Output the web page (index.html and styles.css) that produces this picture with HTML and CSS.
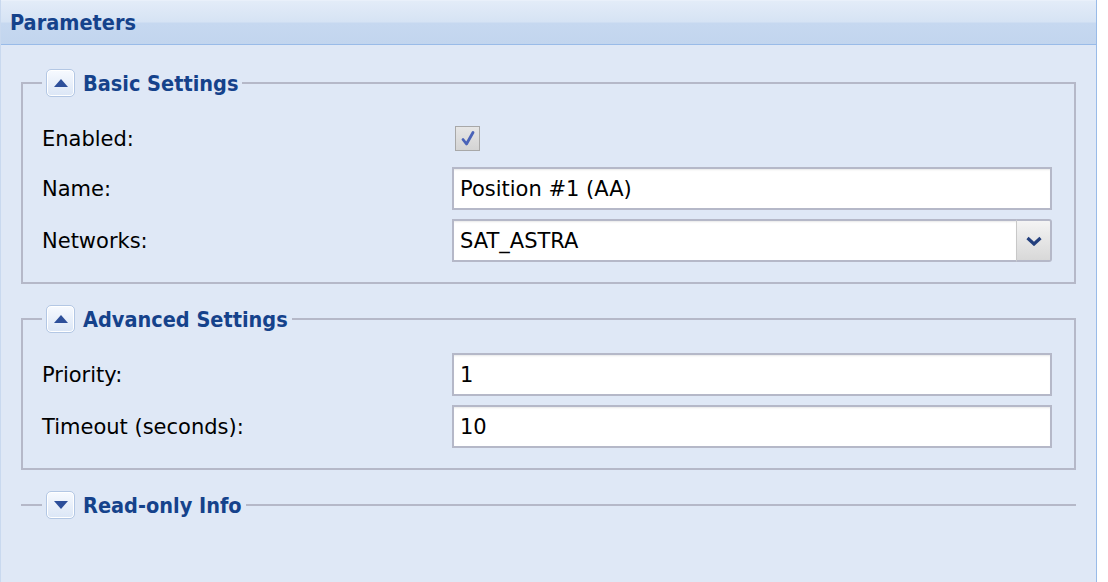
FILE: index.html
```html
<!DOCTYPE html>
<html lang="en">
<head>
<meta charset="UTF-8">
<title>Parameters</title>
<link rel="stylesheet" href="styles.css">
</head>
<body>
<div class="panel">
  <div class="panel-header">Parameters</div>
  <div class="panel-body">

    <fieldset class="fs">
      <legend><span class="toggle"><svg width="14" height="8" viewBox="0 0 14 8"><path d="M0 8 L7 0 L14 8 Z" fill="#2d4f9a"/></svg></span>Basic Settings</legend>
      <div class="row row-check">
        <label>Enabled:</label>
        <span class="check"><svg width="22" height="22" viewBox="0 0 22 22"><path d="M6 11.5 L9.5 16 L16 4.5" fill="none" stroke="#4a63b8" stroke-width="2.8" stroke-linecap="round" stroke-linejoin="round"/></svg></span>
      </div>
      <div class="row">
        <label>Name:</label>
        <div class="field">Position #1 (AA)</div>
      </div>
      <div class="row">
        <label>Networks:</label>
        <div class="combo">
          <div class="field">SAT_ASTRA</div>
          <span class="trigger"><svg width="16" height="10" viewBox="0 0 16 10"><path d="M1.5 2 L8 8 L14.5 2" fill="none" stroke="#24407e" stroke-width="3.2" stroke-linejoin="miter"/></svg></span>
        </div>
      </div>
    </fieldset>

    <fieldset class="fs fs-adv">
      <legend><span class="toggle"><svg width="14" height="8" viewBox="0 0 14 8"><path d="M0 8 L7 0 L14 8 Z" fill="#2d4f9a"/></svg></span>Advanced Settings</legend>
      <div class="row">
        <label>Priority:</label>
        <div class="field">1</div>
      </div>
      <div class="row">
        <label>Timeout (seconds):</label>
        <div class="field">10</div>
      </div>
    </fieldset>

    <fieldset class="fs collapsed">
      <legend><span class="toggle"><svg width="14" height="8" viewBox="0 0 14 8"><path d="M0 0 L7 8 L14 0 Z" fill="#2d4f9a"/></svg></span>Read-only Info</legend>
    </fieldset>

  </div>
</div>
</body>
</html>
```

FILE: styles.css
```css
:root{
  --title:#15428b;
  --line:#b5b8c8;
  --body:#dfe8f6;
  --edge:#99bbe8;
}
*{box-sizing:border-box;margin:0;padding:0;}
body{background:#fff;font-family:"DejaVu Sans",Verdana,sans-serif;color:#000;}
.panel{width:1097px;height:582px;background:var(--body);border-left:1px solid #c9d9ef;border-right:1px solid var(--edge);}
.panel-header{height:45px;padding:9px 0 0 9px;font-family:"DejaVu Sans Condensed","DejaVu Sans",sans-serif;font-size:21.5px;font-weight:bold;color:var(--title);background:linear-gradient(#e3ecf8 0,#d6e3f4 48%,#c6d8f0 52%,#c2d5ee 100%);border-bottom:1px solid var(--edge);border-top:1px solid #e9f0fa;}
.panel-body{padding:24px 20px 0 20px;}
.fs{border:2px solid var(--line);padding:22px 22px 20px 19px;margin-bottom:21px;}
.fs-adv{padding-top:20px;padding-bottom:20px;}
.fs legend{display:flex;align-items:center;padding:0 4px 0 4px;font-family:"DejaVu Sans Condensed","DejaVu Sans",sans-serif;font-size:21.5px;font-weight:bold;color:var(--title);height:28px;}
.toggle{width:29px;height:28px;margin-right:8px;border:1px solid #b3c7e4;border-radius:5px;background:linear-gradient(#f7faff,#dbe6f6);display:flex;align-items:center;justify-content:center;box-shadow:inset 0 0 0 1px #fff;}
.toggle svg{display:block;}
.collapsed{border-left:none;border-right:none;border-bottom:none;padding:0;margin-top:21px;}
.collapsed legend{margin-left:21px;}
.row{display:flex;align-items:center;height:43px;margin-bottom:9px;font-size:21px;}
.row:last-child{margin-bottom:0;}
.row label{width:410px;flex:none;}
.row-check{height:39px;}
.check{width:25px;height:25px;margin-left:3px;border:1px solid #a8a8a8;background:linear-gradient(#e6e6e6,#d4d4d4);display:flex;align-items:center;justify-content:center;}
.field{flex:1;height:43px;border:2px solid var(--line);background-color:#fff;padding:0 0 0 6px;display:flex;align-items:center;box-shadow:inset 0 2px 2px -1px #e8e8e8;}
.combo{flex:1;display:flex;height:43px;}
.combo .field{border-right:none;}
.trigger{width:36px;flex:none;border:2px solid var(--line);border-left:1px solid #c8c8c8;border-radius:0 3px 3px 0;background:linear-gradient(#f4f4f4,#d8d8d8);display:flex;align-items:center;justify-content:center;}
```
